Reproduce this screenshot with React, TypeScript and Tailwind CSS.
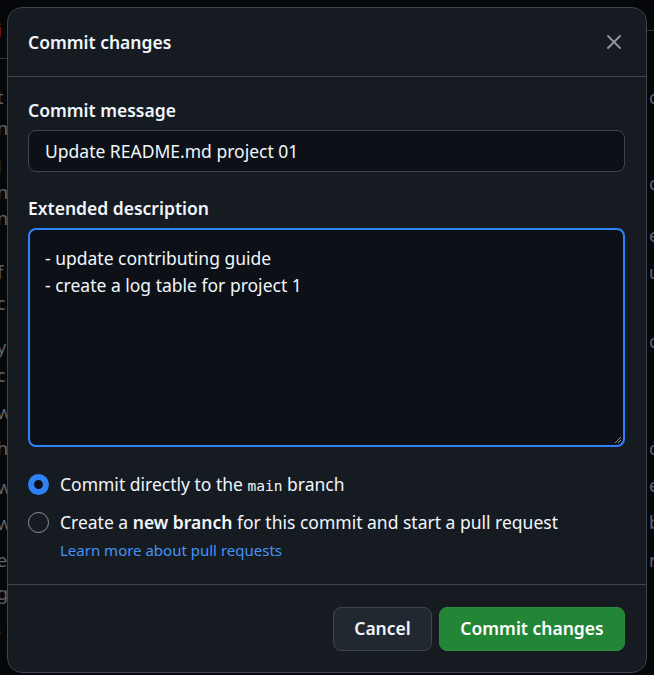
const leftMarks = [
  { y: 30, ch: "i", c: "text-[#c9514a]" },
  { y: 97, ch: "t", c: "" },
  { y: 128, ch: "n", c: "" },
  { y: 167, ch: "l", c: "text-[#3b82c4]" },
  { y: 192, ch: "n", c: "" },
  { y: 218, ch: "n", c: "" },
  { y: 272, ch: "f", c: "" },
  { y: 303, ch: "c", c: "" },
  { y: 347, ch: "y", c: "" },
  { y: 375, ch: "c", c: "" },
  { y: 412, ch: "w", c: "" },
  { y: 448, ch: "h", c: "" },
  { y: 487, ch: "w", c: "" },
  { y: 523, ch: "w", c: "" },
  { y: 560, ch: "e", c: "" },
  { y: 593, ch: "g", c: "" },
  { y: 627, ch: ",", c: "" },
];

const rightMarks = [
  { y: 97, ch: "c" },
  { y: 183, ch: "c" },
  { y: 235, ch: "e" },
  { y: 272, ch: "u" },
  { y: 341, ch: "c" },
  { y: 448, ch: "c" },
  { y: 485, ch: "e" },
  { y: 522, ch: "b" },
  { y: 560, ch: "r" },
];

function Radio({ checked }: { checked?: boolean }) {
  return checked ? (
    <span className="w-[21px] h-[21px] shrink-0 rounded-full border-[6px] border-[#2f81f7] bg-[#0d1117]" />
  ) : (
    <span className="w-[21px] h-[21px] shrink-0 rounded-full border border-[#8b939c] bg-transparent" />
  );
}

export default function App() {
  return (
    <div
      className="relative w-[654px] h-[675px] overflow-hidden bg-[#05070a] text-[#f0f6fc]"
      style={{ fontFamily: '"Segoe UI", "Noto Sans", "Open Sans", sans-serif' }}
    >
      {/* page behind the dialog */}
      <div className="absolute left-0 top-[58px] w-[7px] h-px bg-[#30363d]" />
      <div className="absolute right-0 top-[30px] w-[7px] h-px bg-[#30363d]" />
      {leftMarks.map((m, i) => (
        <span
          key={i}
          className={`absolute left-[-3px] text-[18px] leading-none -translate-y-1/2 ${m.c || "text-[#5d646c]"}`}
          style={{ top: m.y }}
        >
          {m.ch}
        </span>
      ))}
      {rightMarks.map((m, i) => (
        <span
          key={i}
          className="absolute left-[649px] text-[18px] leading-none -translate-y-1/2 text-[#5d646c]"
          style={{ top: m.y }}
        >
          {m.ch}
        </span>
      ))}

      {/* dialog */}
      <div className="absolute left-[7px] top-[7px] w-[640px] h-[666px] rounded-[15px] border border-[#3d444d] bg-[#161b22] flex flex-col">
        <header className="h-[69px] shrink-0 flex items-center justify-between pl-[20px] pr-[25px] border-b border-[#3d444d]">
          <h2 className="text-[17.5px] font-semibold">Commit changes</h2>
          <svg width="14" height="14" viewBox="0 0 14 14" className="text-[#9198a1]">
            <path d="M1 1 L13 13 M13 1 L1 13" stroke="currentColor" strokeWidth="1.8" strokeLinecap="round" />
          </svg>
        </header>

        <main className="flex-1 flex flex-col pl-[20px] pr-[21px] pt-[20px]">
          <label className="text-[17.5px] font-semibold leading-[26px]">Commit message</label>
          <div className="mt-[7px] h-[42px] flex items-center px-[16px] rounded-[8px] border border-[#3d444d] bg-[#0d1117] text-[17.5px]">
            Update README.md project 01
          </div>

          <label className="mt-[23px] text-[17.5px] font-semibold leading-[26px]">Extended description</label>
          <div className="relative mt-[7px] h-[219px] rounded-[8px] border-2 border-[#2f81f7] bg-[#0d1117] px-[15px] pt-[15px] text-[17.5px] leading-[27px]">
            <div>- update contributing guide</div>
            <div>- create a log table for project 1</div>
            <svg className="absolute right-[1px] bottom-[1px]" width="9" height="9" viewBox="0 0 9 9">
              <path d="M8 2 L2 8 M8 5 L5 8" stroke="#8b939c" strokeWidth="1" />
            </svg>
          </div>

          <div className="mt-[26px] flex items-center gap-[11px] h-[22px]">
            <Radio checked />
            <span className="text-[17.5px]">
              Commit directly to the{" "}
              <span className="text-[14.5px]" style={{ fontFamily: '"DejaVu Sans Mono", "Liberation Mono", monospace' }}>
                main
              </span>{" "}
              branch
            </span>
          </div>
          <div className="mt-[16px] flex items-center gap-[11px] h-[22px]">
            <Radio />
            <span className="text-[17.5px]">
              Create a <b className="font-semibold">new branch</b> for this commit and start a pull request
            </span>
          </div>
          <a className="mt-[7px] ml-[32px] text-[15px] text-[#4493f8] leading-[20px]">Learn more about pull requests</a>
        </main>

        <footer className="h-[88px] shrink-0 border-t border-[#3d444d] flex items-center justify-end gap-[7px] pl-[20px] pr-[21px]">
          <button className="h-[44px] w-[99px] rounded-[8px] border border-[#3d444d] bg-[#212830] text-[17.5px] font-semibold text-[#f0f6fc]">
            Cancel
          </button>
          <button className="h-[44px] w-[186px] rounded-[8px] border border-[#2d8a3c] bg-[#238636] text-[17.5px] font-semibold text-white">
            Commit changes
          </button>
        </footer>
      </div>
    </div>
  );
}
